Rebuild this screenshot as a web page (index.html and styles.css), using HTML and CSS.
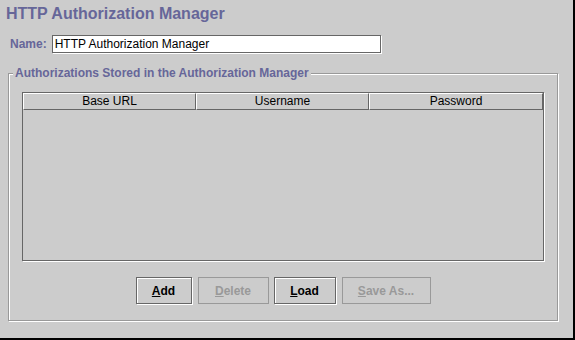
FILE: index.html
```html
<!DOCTYPE html>
<html lang="en">
<head>
  <meta charset="UTF-8" />
  <title>HTTP Authorization Manager</title>
  <link rel="stylesheet" href="styles.css">
</head>
<body>
  <div class="panel">
    <h1>HTTP Authorization Manager</h1>

    <div class="name-row">
      <label for="name">Name:</label>
      <input id="name" type="text" value="HTTP Authorization Manager">
    </div>

    <fieldset class="group">
      <legend>Authorizations Stored in the Authorization Manager</legend>
      <div class="group-body">
        <div class="table-pane">
          <div class="table-head">
            <div class="th">Base URL</div>
            <div class="th">Username</div>
            <div class="th">Password</div>
          </div>
          <div class="table-rows"></div>
        </div>

        <div class="buttons">
          <button class="btn btn-add"><u>A</u>dd</button>
          <button class="btn btn-delete" disabled><u>D</u>elete</button>
          <button class="btn btn-load"><u>L</u>oad</button>
          <button class="btn btn-save" disabled><u>S</u>ave As...</button>
        </div>
      </div>
    </fieldset>
  </div>
</body>
</html>
```

FILE: styles.css
```css
* {
  margin: 0;
  padding: 0;
  box-sizing: border-box;
}
body {
  font-family: 'Liberation Sans', Arial, sans-serif;
  font-size: 12px;
  background: #cccccc;
  color: #000;
}
.panel {
  width: 575px;
  height: 340px;
  border-right: 2px solid #000;
  border-bottom: 2px solid #000;
  padding-top: 5px;
}
.panel h1 {
  font-size: 16px;
  line-height: 18px;
  font-weight: bold;
  color: #666699;
  padding-left: 6px;
}
.name-row {
  display: flex;
  align-items: center;
  margin-top: 12px;
  padding-left: 10px;
  gap: 5px;
}
.name-row label {
  font-weight: bold;
  color: #666699;
}
.name-row input {
  width: 329px;
  height: 18px;
  border: 1px solid #666666;
  box-shadow: 1px 1px 0 #ffffff;
  background: #ffffff;
  font-family: inherit;
  font-size: 12px;
  padding: 0 2px;
  outline: none;
}
.group {
  margin: 13px 0 0 8px;
  width: 550px;
  border: 1px solid #999999;
  box-shadow: inset 1px 1px 0 #ffffff, 1px 1px 0 #ffffff;
}
.group legend {
  margin-left: 4px;
  padding: 0 2px;
  font-weight: bold;
  line-height: 14px;
  color: #666699;
  background: #cccccc;
}
.group-body {
  padding: 12px 0 16px 13px;
}
.table-pane {
  width: 522px;
  height: 169px;
  border: 1px solid #666666;
  box-shadow: 1px 1px 0 #ffffff;
}
.table-head {
  display: grid;
  grid-template-columns: 173px 173px 174px;
}
.th {
  line-height: 15px;
  text-align: center;
  border-top: 1px solid #ffffff;
  border-left: 1px solid #ffffff;
  border-right: 1px solid #666666;
  border-bottom: 1px solid #666666;
}
.buttons {
  display: flex;
  justify-content: center;
  gap: 5px;
  margin-top: 16px;
  padding-right: 13px;
}
.btn {
  height: 27px;
  font-family: inherit;
  font-size: 12px;
  font-weight: bold;
  color: #000;
  background: #cccccc;
  border: 1px solid #666666;
  box-shadow: inset 1px 1px 0 #ffffff, 1px 1px 0 #ffffff;
}
.btn:disabled {
  color: #999999;
  border-color: #999999;
  box-shadow: none;
}
.btn-add { width: 56px; margin-right: 1px; }
.btn-delete { width: 71px; }
.btn-load { width: 62px; margin-right: 1px; }
.btn-save { width: 89px; }
```
